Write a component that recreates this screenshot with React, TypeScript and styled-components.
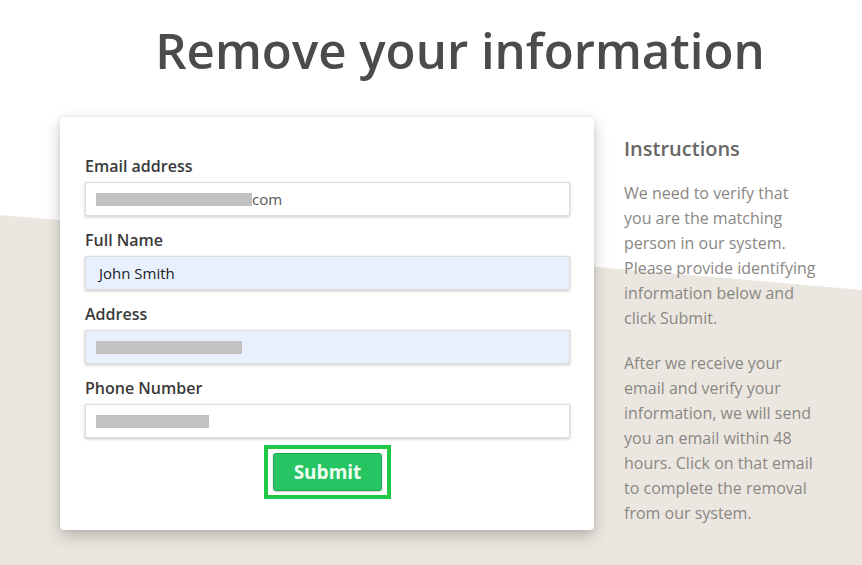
import styled, { createGlobalStyle } from "styled-components";

const GlobalStyle = createGlobalStyle`
  html, body {
    margin: 0;
    padding: 0;
    background: #ffffff;
  }
  body {
    font-family: "Open Sans", "Liberation Sans", sans-serif;
    color: #333;
  }
`;

const Page = styled.div`
  position: relative;
  min-height: 565px;
  overflow: hidden;

  &::before {
    content: "";
    position: absolute;
    inset: 0;
    background: #ebe7e0;
    clip-path: polygon(0 215px, 100% 290px, 100% 100%, 0 100%);
    z-index: 0;
  }
`;

const Content = styled.div`
  position: relative;
  z-index: 1;
`;

const Title = styled.h1`
  margin: 0;
  padding: 18px 0 0 58px;
  text-align: center;
  font-size: 49.2px;
  font-weight: 600;
  line-height: 64px;
  color: #4b4b4b;
`;

const Row = styled.div`
  display: flex;
  align-items: flex-start;
  gap: 30px;
  padding: 35px 0 0 60px;
`;

const Card = styled.form`
  width: 534px;
  box-sizing: border-box;
  padding: 37px 24px 31px 25px;
  display: flex;
  flex-direction: column;
  gap: 12px;
  background: #fff;
  border-radius: 4px;
  box-shadow: 0 6px 16px rgba(0, 0, 0, 0.22), 0 0 4px rgba(0, 0, 0, 0.08);
`;

const Field = styled.div`
  display: flex;
  flex-direction: column;
  gap: 4px;
`;

const Label = styled.label`
  font-size: 16px;
  font-weight: 600;
  line-height: 24px;
  color: #3a3a3a;
`;

const Input = styled.div<{ $autofill?: boolean }>`
  height: 34px;
  box-sizing: border-box;
  display: flex;
  align-items: center;
  padding: 0 13px;
  background: ${(p) => (p.$autofill ? "#e8f0fe" : "#ffffff")};
  border: 1px solid #dcdcdc;
  box-shadow: 0 1px 3px rgba(0, 0, 0, 0.22);
  font-size: 15px;
  color: #222;
`;

const Redacted = styled.span<{ $w: number }>`
  display: inline-block;
  width: ${(p) => p.$w}px;
  height: 13px;
  margin-left: -3px;
  background: #c2c2c2;
`;

const Muted = styled.span`
  color: #555;
`;

const ButtonRow = styled.div`
  display: flex;
  justify-content: center;
  margin-top: -5px;
`;

const Highlight = styled.div`
  border: 4px solid #1fc947;
  padding: 4px 5px;
`;

const SubmitButton = styled.button`
  width: 109px;
  height: 38px;
  background: #27c464;
  border: 1px solid #1fa653;
  border-radius: 3px;
  color: #effff2;
  font-family: "Open Sans", "Liberation Sans", sans-serif;
  font-size: 19px;
  font-weight: 700;
  box-shadow: 0 1px 2px rgba(0, 0, 0, 0.2);
  cursor: pointer;
`;

const Side = styled.aside`
  padding-top: 17px;
`;

const SideTitle = styled.h2`
  margin: 0 0 17px;
  font-size: 20px;
  font-weight: 600;
  line-height: 30px;
  color: #676767;
`;

const Para = styled.p`
  margin: 0 0 20px;
  font-size: 16px;
  line-height: 25px;
  color: #8a8784;
  white-space: nowrap;
`;

export default function App() {
  return (
    <>
      <GlobalStyle />
      <Page>
        <Content>
          <Title>Remove your information</Title>
          <Row>
            <Card onSubmit={(e) => e.preventDefault()}>
              <Field>
                <Label>Email address</Label>
                <Input>
                  <Redacted $w={156} />
                  <Muted>com</Muted>
                </Input>
              </Field>
              <Field>
                <Label>Full Name</Label>
                <Input $autofill>John Smith</Input>
              </Field>
              <Field>
                <Label>Address</Label>
                <Input $autofill>
                  <Redacted $w={146} />
                </Input>
              </Field>
              <Field>
                <Label>Phone Number</Label>
                <Input>
                  <Redacted $w={113} />
                </Input>
              </Field>
              <ButtonRow>
                <Highlight>
                  <SubmitButton type="submit">Submit</SubmitButton>
                </Highlight>
              </ButtonRow>
            </Card>
            <Side>
              <SideTitle>Instructions</SideTitle>
              <Para>
                We need to verify that
                <br />
                you are the matching
                <br />
                person in our system.
                <br />
                Please provide identifying
                <br />
                information below and
                <br />
                click Submit.
              </Para>
              <Para>
                After we receive your
                <br />
                email and verify your
                <br />
                information, we will send
                <br />
                you an email within 48
                <br />
                hours. Click on that email
                <br />
                to complete the removal
                <br />
                from our system.
              </Para>
            </Side>
          </Row>
        </Content>
      </Page>
    </>
  );
}
